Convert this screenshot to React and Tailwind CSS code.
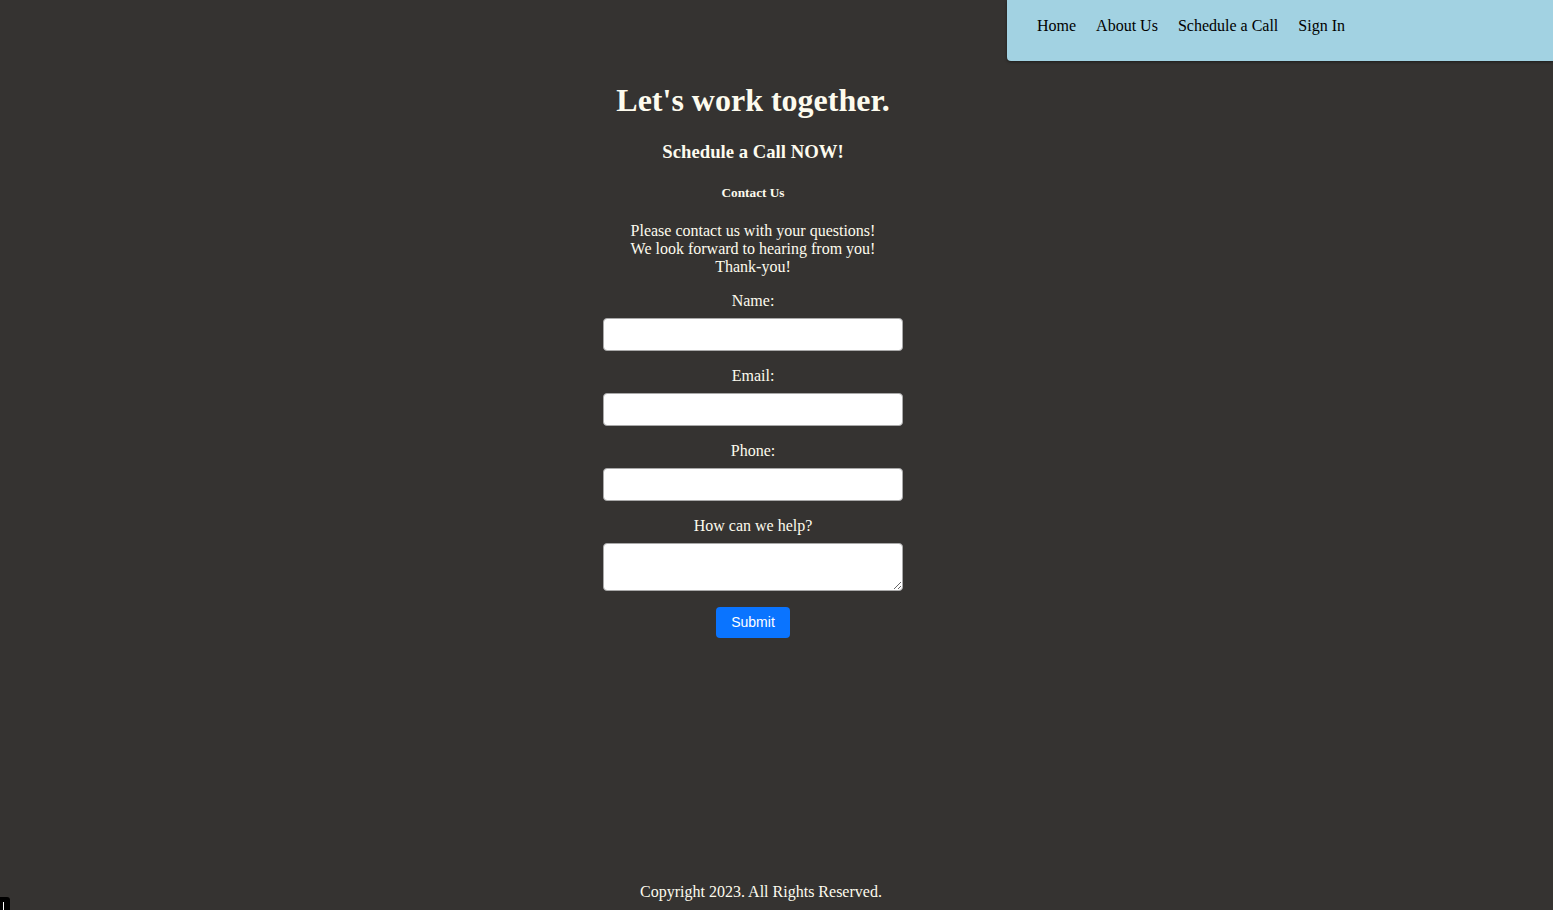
import React from "react";

const serif = { fontFamily: '"Liberation Serif", "Times New Roman", serif' };

function Field({ label, multiline }) {
  return (
    <>
      <label className="mt-[16px] text-[16px] leading-[18px]">{label}</label>
      {multiline ? (
        <textarea className="mt-[8px] w-[300px] h-[48px] bg-white border border-[#a9a9a9] rounded-[4px] block" />
      ) : (
        <input
          type="text"
          className="mt-[8px] w-[300px] h-[33px] bg-white border border-[#a9a9a9] rounded-[4px] block"
        />
      )}
    </>
  );
}

export default function App() {
  return (
    <div
      className="relative min-h-[910px] bg-[#353331] text-[#fdfbee] flex flex-col"
      style={serif}
    >
      <header className="flex justify-end">
        <nav className="w-[546px] h-[61px] bg-[#a2d2e2] rounded-bl-[4px] shadow-[0_1px_3px_rgba(0,0,0,0.45)] pl-[30px] pt-[17px] flex gap-[20px] text-black text-[16px] leading-[18px]">
          <a href="#">Home</a>
          <a href="#">About Us</a>
          <a href="#">Schedule a Call</a>
          <a href="#">Sign In</a>
        </nav>
      </header>

      <main className="flex-1 flex flex-col items-center pr-[47px] pt-[21px] text-center">
        <h1 className="text-[32px] leading-[37px] font-bold">Let's work together.</h1>
        <h3 className="mt-[22px] text-[18.72px] leading-[22px] font-bold">Schedule a Call NOW!</h3>
        <h5 className="mt-[22px] text-[13.28px] leading-[16px] font-bold">Contact Us</h5>
        <p className="mt-[21px] text-[16px] leading-[18px]">
          Please contact us with your questions!
          <br />
          We look forward to hearing from you!
          <br />
          Thank-you!
        </p>
        <form className="flex flex-col items-center" onSubmit={(e) => e.preventDefault()}>
          <Field label="Name:" />
          <Field label="Email:" />
          <Field label="Phone:" />
          <Field label="How can we help?" multiline />
          <button
            type="submit"
            className="mt-[16px] w-[74px] h-[31px] bg-[#0a74ff] text-white rounded-[4px] text-[14px] font-medium"
            style={{ fontFamily: '"Liberation Sans", Arial, sans-serif' }}
          >
            Submit
          </button>
        </form>
      </main>

      <footer className="pr-[31px] pb-[9px] text-center text-[16px] leading-[18px]">
        Copyright 2023. All Rights Reserved.
      </footer>

      <div className="absolute left-0 bottom-0 w-[10px] h-[13px] bg-black rounded-tr-[3px] flex items-end pl-[3px]">
        <div className="w-[1px] h-[8px] bg-white" />
      </div>
    </div>
  );
}
